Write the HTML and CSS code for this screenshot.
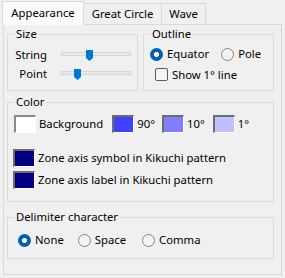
FILE: index.html
```html
<!DOCTYPE html>
<html>
<head>
<meta charset="utf-8">
<link rel="stylesheet" href="styles.css">
</head>
<body>
<div class="window">
  <div class="tabstrip">
    <div class="tab active">Appearance</div>
    <div class="tab gc">Great Circle</div>
    <div class="tab wave">Wave</div>
  </div>
  <div class="panel">
    <div class="toprow">
      <fieldset class="group size">
        <legend>Size</legend>
        <div class="srow">
          <span class="slabel">String</span>
          <div class="slider"><div class="track"></div><div class="thumb t1"></div></div>
        </div>
        <div class="srow">
          <span class="slabel">Point</span>
          <div class="slider"><div class="track"></div><div class="thumb t2"></div></div>
        </div>
      </fieldset>
      <fieldset class="group outline">
        <legend>Outline</legend>
        <div class="orow radios">
          <label class="opt"><span class="radio on"></span>Equator</label>
          <label class="opt pole"><span class="radio"></span>Pole</label>
        </div>
        <div class="orow check">
          <label class="opt"><span class="checkbox"></span>Show 1° line</label>
        </div>
      </fieldset>
    </div>
    <fieldset class="group color">
      <legend>Color</legend>
      <div class="swrow">
        <div class="sw-item bgitem"><span class="swatch sw-white"></span>Background</div>
        <div class="sw-item i90"><span class="swatch sw-90"></span>90°</div>
        <div class="sw-item i10"><span class="swatch sw-10"></span>10°</div>
        <div class="sw-item"><span class="swatch sw-1"></span>1°</div>
      </div>
      <div class="zone first"><span class="swatch sw-navy"></span>Zone axis symbol in Kikuchi pattern</div>
      <div class="zone"><span class="swatch sw-navy"></span>Zone axis label in Kikuchi pattern</div>
    </fieldset>
    <fieldset class="group delim">
      <legend>Delimiter character</legend>
      <div class="drow">
        <label class="opt"><span class="radio on"></span>None</label>
        <label class="opt d-space"><span class="radio"></span>Space</label>
        <label class="opt d-comma"><span class="radio"></span>Comma</label>
      </div>
    </fieldset>
  </div>
</div>
</body>
</html>
```
FILE: styles.css
```css
html, body {
  margin: 0;
  padding: 0;
  background: #f0f0f0;
}
body {
  font-family: "Noto Sans", "Open Sans", sans-serif;
  font-size: 11.3px;
  color: #000;
}
.window {
  width: 285px;
  height: 278px;
}
.tabstrip {
  display: flex;
  padding: 1px 0 0 2px;
  height: 24px;
  box-sizing: border-box;
  position: relative;
  z-index: 1;
}
.tab {
  box-sizing: border-box;
  height: 21px;
  margin-top: 2px;
  padding-top: 2px;
  border: 1px solid #d9d9d9;
  border-bottom: none;
  border-left: none;
  background: #f0f0f0;
  line-height: 16px;
  white-space: nowrap;
  text-align: center;
}
.tab.active {
  width: 82px;
  height: 24px;
  margin-top: 0;
  margin-bottom: -1px;
  padding-top: 3px;
  border-left: 1px solid #d9d9d9;
  background: #fbfbfb;
}
.tab.gc { width: 78px; }
.tab.wave { width: 44px; }
.panel {
  margin-left: 3px;
  width: 279px;
  height: 251px;
  box-sizing: border-box;
  border: 1px solid #d9d9d9;
  background: #f0f0f0;
  padding: 1px 0 0 3px;
}
.toprow {
  display: flex;
}
.group {
  margin: 0;
  padding: 0;
  border: 1px solid #dcdcdc;
  min-width: 0;
  box-sizing: border-box;
}
.group legend {
  margin-left: 6px;
  padding: 0 2px;
  line-height: 16px;
}
.size {
  width: 131px;
  padding: 3px 0 4px 0;
}
.srow {
  display: flex;
  align-items: center;
  height: 19px;
}
.slabel {
  width: 39px;
  text-align: right;
  line-height: 16px;
}
.slider {
  position: relative;
  margin-left: 14px;
  width: 70px;
  height: 19px;
}
.track {
  position: absolute;
  left: 0;
  right: 0;
  top: 7px;
  height: 4px;
  box-sizing: border-box;
  background: #e7eaea;
  border: 1px solid #d6d6d6;
}
.thumb {
  position: absolute;
  top: 5px;
  width: 7px;
  height: 11px;
  background: #0078d7;
  clip-path: polygon(0 0, 100% 0, 100% 72%, 50% 100%, 0 72%);
}
.t1 { left: 25px; }
.t2 { left: 13px; }

.outline {
  width: 131px;
  margin-left: 5px;
  padding: 2px 0 5px 0;
}
.orow {
  display: flex;
  align-items: center;
  height: 20px;
}
.orow.check { height: 21px; }
.radios { padding-left: 6px; }
.check { padding-left: 11px; }
.opt {
  display: flex;
  align-items: center;
  gap: 4px;
  line-height: 16px;
  white-space: nowrap;
}
.pole { margin-left: 12px; }
.radio {
  width: 13px;
  height: 13px;
  box-sizing: border-box;
  border-radius: 50%;
  border: 1px solid #858585;
  background: #f3f3f3;
  flex: none;
}
.radio.on {
  border: none;
  background: radial-gradient(circle, #fff 0 2.3px, #005fb8 2.8px);
}
.checkbox {
  width: 13px;
  height: 13px;
  box-sizing: border-box;
  border: 1px solid #5c5c5c;
  border-radius: 2px;
  background: #f5f5f5;
  flex: none;
}

.color {
  width: 267px;
  margin-top: 3px;
  padding: 5px 0 12px 0;
}
.swrow {
  display: flex;
  align-items: center;
  height: 18px;
  padding-left: 6px;
}
.sw-item {
  display: flex;
  align-items: center;
  gap: 3px;
  line-height: 16px;
  white-space: nowrap;
}
.bgitem { margin-right: 9px; }
.i90 { margin-right: 7px; }
.i10 { margin-right: 8px; }
.swatch {
  width: 22px;
  height: 18px;
  box-sizing: border-box;
  border-top: 2px solid #6d6d6d;
  border-left: 2px solid #6d6d6d;
  border-right: 1px solid #ffffff;
  border-bottom: 1px solid #ffffff;
  flex: none;
}
.sw-white { background: #ffffff; border-top-color: #8a8a8a; border-left-color: #8a8a8a; }
.sw-90 { background: #4040ff; }
.sw-10 { background: #8080ff; }
.sw-1 { background: #c0c0ff; }
.sw-navy { background: #000080; }
.zone {
  display: flex;
  align-items: center;
  gap: 3px;
  height: 18px;
  line-height: 16px;
  padding-left: 5px;
  margin-top: 4px;
  white-space: nowrap;
}
.zone.first { margin-top: 16px; }

.delim {
  width: 267px;
  margin-top: 7px;
  padding: 7px 0 10px 0;
}
.drow {
  display: flex;
  align-items: center;
  height: 16px;
  padding-left: 10px;
}
.d-space { margin-left: 14px; }
.d-comma { margin-left: 16px; }
```
